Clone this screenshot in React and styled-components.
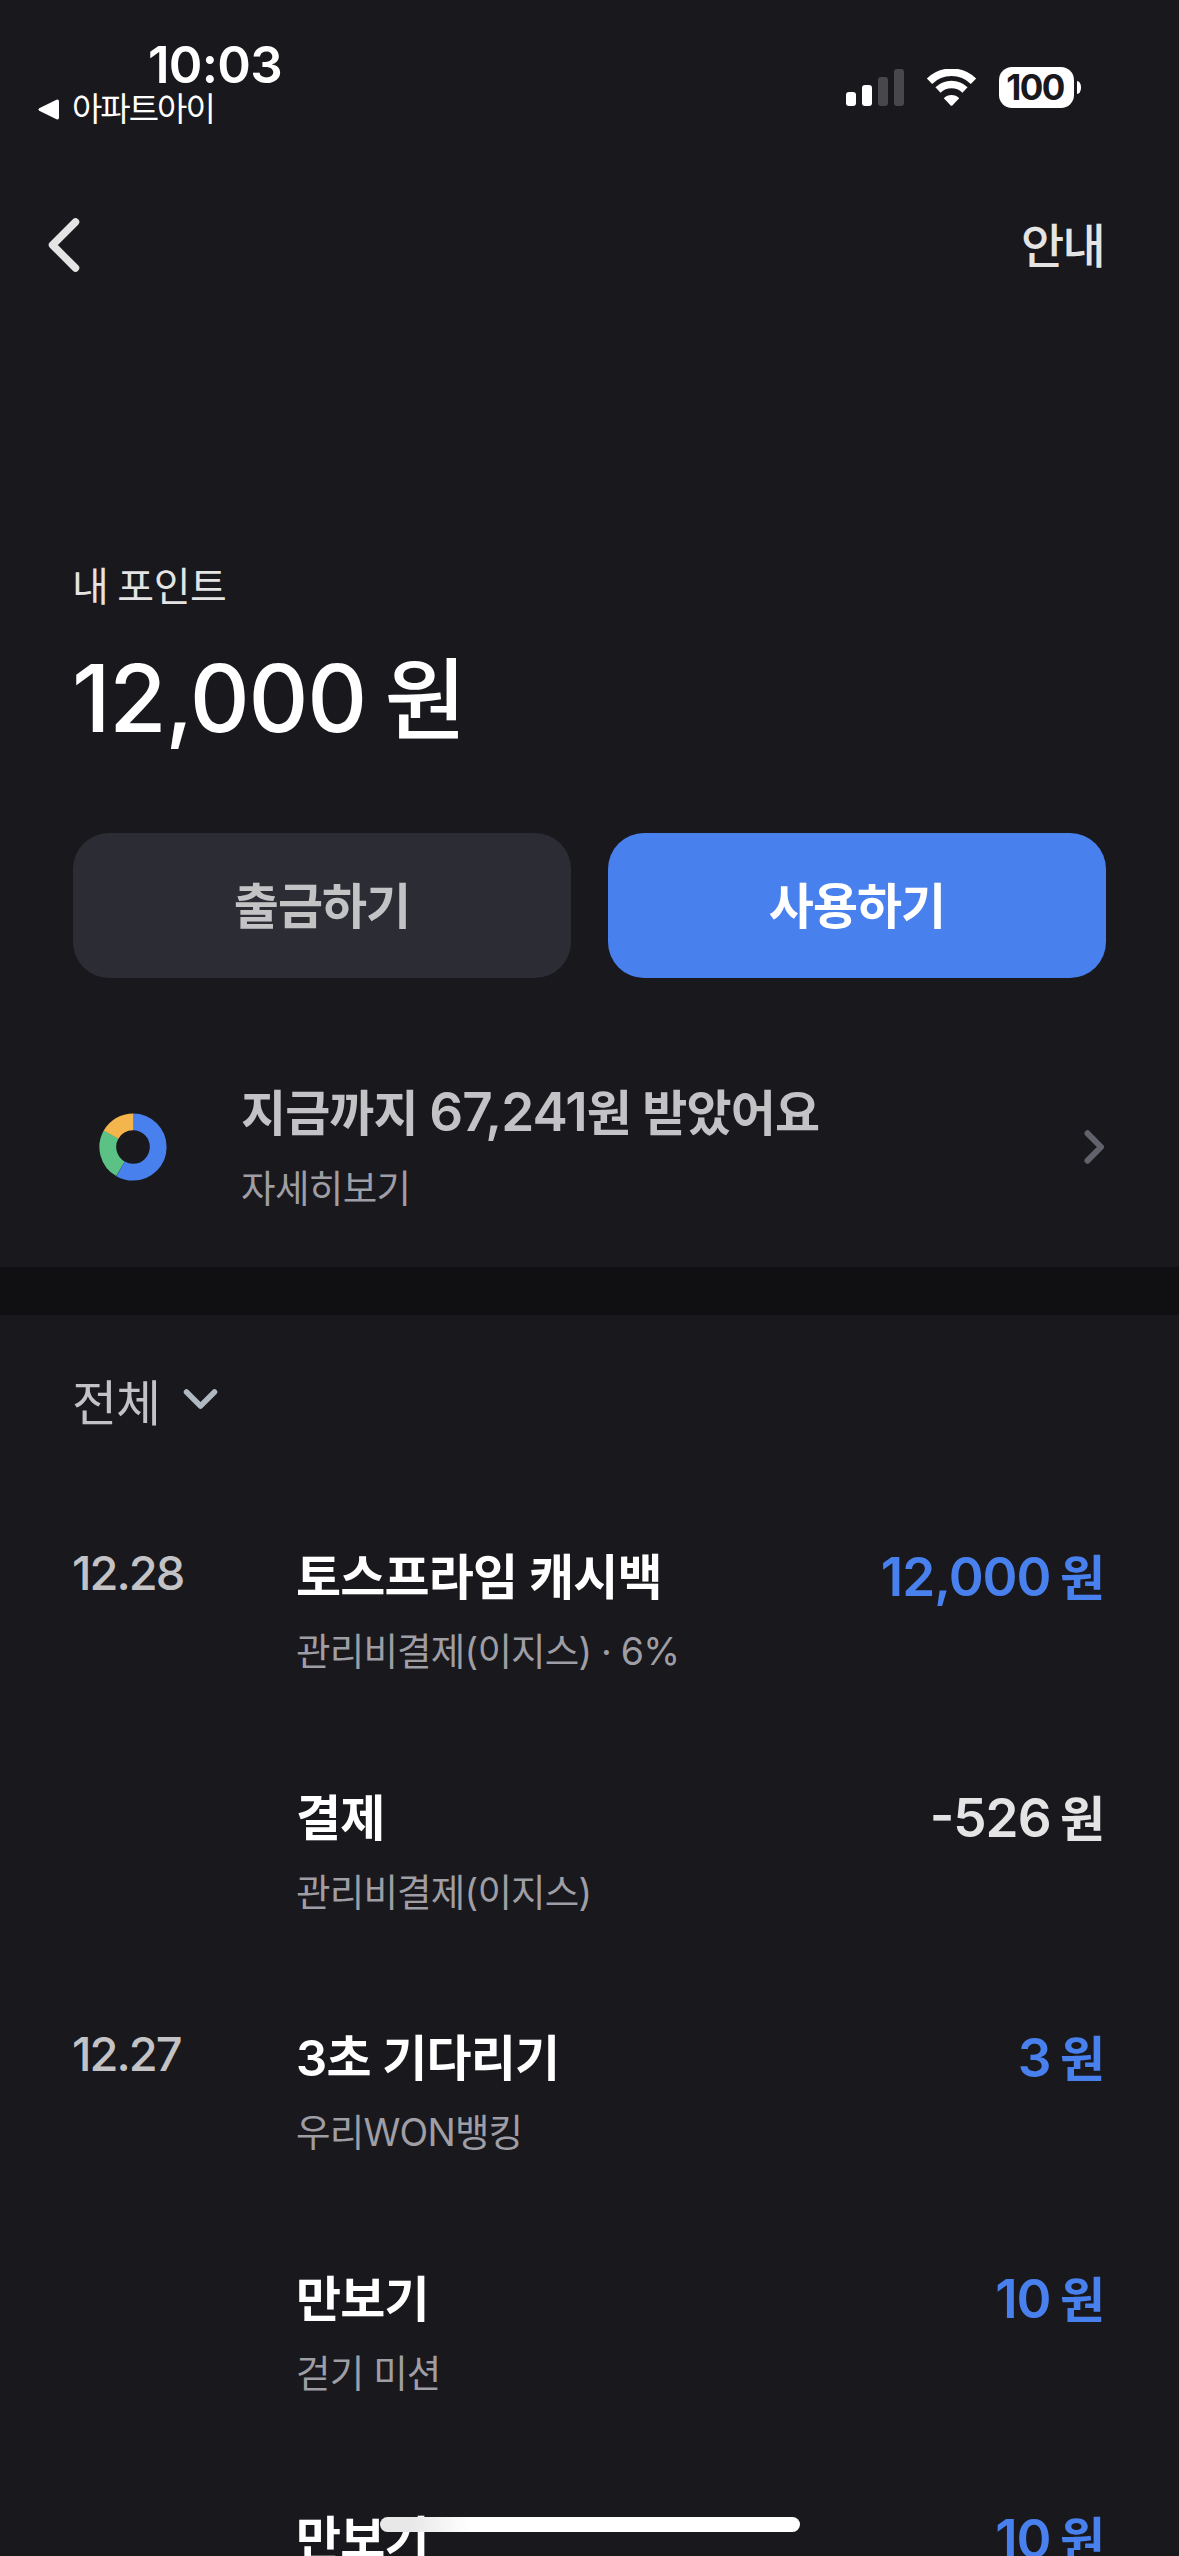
import React from "react";
import styled, { createGlobalStyle } from "styled-components";

const GlobalStyle = createGlobalStyle`
  * {
    box-sizing: border-box;
  }
  body {
    margin: 0;
    background: #19181d;
    overflow: hidden;
  }
  button {
    border: 0;
    padding: 0;
    background: none;
    color: inherit;
    font-family: inherit;
  }
  svg {
    display: block;
  }
`;

const Screen = styled.div`
  width: 1179px;
  height: 2556px;
  overflow: hidden;
  background: #19181d;
  color: #fff;
  font-family: Inter, "Noto Sans CJK KR", sans-serif;
  white-space: nowrap;
`;

const StatusBar = styled.header`
  display: flex;
  justify-content: space-between;
  height: 170px;
  padding: 40px 98px 0 37px;
`;

const Clock = styled.div`
  padding-left: 111px;
  font-size: 51px;
  font-weight: 600;
  line-height: 50px;
  letter-spacing: -0.7px;
`;

const BackToApp = styled.div`
  display: flex;
  align-items: center;
  gap: 12px;
  height: 40px;
  font-size: 33px;
  line-height: 36px;
  letter-spacing: -2px;
`;

const BackLabel = styled.span`
  padding-bottom: 2px;
`;

const StatusIcons = styled.div`
  display: flex;
  align-items: flex-start;
  padding-top: 27px;
`;

const Signal = styled.div`
  display: flex;
  align-items: flex-end;
  gap: 6px;
  height: 39px;
  margin-right: 22px;
`;

const Bar = styled.i`
  width: 10px;
  height: ${(props) => props.$height}px;
  border-radius: 3px;
  background: ${(props) => (props.$on ? "#fff" : "#48474c")};
`;

const Wifi = styled.svg`
  margin: 2px 22px 0 0;
`;

const Battery = styled.div`
  width: 75px;
  height: 41px;
  padding-right: 3px;
  border-radius: 13px;
  background: #fff;
  color: #19181d;
  font-size: 35px;
  font-weight: 700;
  line-height: 41px;
  letter-spacing: -1.6px;
  text-align: center;
`;

const BatteryCap = styled.i`
  width: 4px;
  height: 13px;
  margin: 14px 0 0 3px;
  border-radius: 0 4px 4px 0 / 0 6px 6px 0;
  background: #fff;
`;

const Nav = styled.nav`
  display: flex;
  align-items: center;
  justify-content: space-between;
  height: 150px;
  padding: 0 75px 0 48px;
`;

const GuideButton = styled.button`
  padding-bottom: 6px;
  color: #e4e4e5;
  font-size: 47px;
  font-weight: 500;
  letter-spacing: -1.8px;
`;

const Balance = styled.section`
  padding: 237px 73px 0 72px;
`;

const BalanceLabel = styled.div`
  color: #e4e4e5;
  font-size: 40px;
  line-height: 60px;
  letter-spacing: -0.4px;
  word-spacing: -2px;
`;

const BalanceAmount = styled.h1`
  height: 120px;
  margin: 21px 0 0;
  font-size: 93px;
  font-weight: 500;
  line-height: 120px;
  letter-spacing: -1.3px;
  word-spacing: -5px;
`;

const Actions = styled.div`
  display: flex;
  gap: 37px;
  padding: 75px 73px 0;
`;

const ActionButton = styled.button`
  flex: 1;
  height: 145px;
  padding-bottom: 7px;
  border-radius: 36px;
  background: ${(props) => (props.$primary ? "#4880ee" : "#2c2c35")};
  color: ${(props) => (props.$primary ? "#fff" : "#c3c3c6")};
  font-size: 49px;
  font-weight: 600;
  letter-spacing: -1px;
`;

const Summary = styled.section`
  display: flex;
  align-items: center;
  height: 289px;
  padding: 50px 73px 0 99px;
`;

const SummaryText = styled.div`
  flex: 1;
  margin-left: 74px;
`;

const SummaryTitle = styled.div`
  height: 70px;
  color: #c3c3c6;
  font-size: 49px;
  font-weight: 600;
  line-height: 70px;
  letter-spacing: -0.9px;
`;

const SummaryLink = styled.div`
  margin-top: 12px;
  color: #9e9ea4;
  font-size: 37.5px;
  line-height: 56px;
  letter-spacing: -0.6px;
`;

const IconSlot = styled.div`
  padding-bottom: 2px;
`;

const Divider = styled.div`
  height: 48px;
  background: #101013;
`;

const Filter = styled.button`
  display: flex;
  align-items: center;
  gap: 22px;
  height: 176px;
  margin-left: 72px;
  padding-bottom: 8px;
  color: #c3c3c6;
  font-size: 49px;
  letter-spacing: -1.2px;
`;

const List = styled.ul`
  margin: 0;
  padding: 0 75px 0 72px;
  list-style: none;
`;

const Row = styled.li`
  display: grid;
  grid-template-columns: 224px 1fr auto;
  height: 240.5px;
  padding-top: 51px;
`;

const DateText = styled.time`
  color: #c3c3c6;
  font-size: 47px;
  font-weight: 500;
  line-height: 62px;
  letter-spacing: -2px;
`;

const RowTitle = styled.div`
  padding-top: 1px;
  font-size: 49px;
  font-weight: 600;
  line-height: 70px;
  letter-spacing: -0.8px;
`;

const RowNote = styled.div`
  margin-top: 11px;
  color: #9e9ea4;
  font-size: 37.5px;
  line-height: 56px;
  letter-spacing: -0.8px;
`;

const Amount = styled.div`
  color: ${(props) => (props.$income ? "#4880ee" : "#e4e4e5")};
  font-size: 53px;
  font-weight: 600;
  line-height: 70px;
  letter-spacing: -1px;
  word-spacing: -3px;
  font-feature-settings: "case";
`;

// figures run larger than the hangul next to them
const Sized = styled.span`
  font-size: ${(props) => props.$size}px;
  line-height: 1;
`;

const HomeIndicator = styled.div`
  position: absolute;
  top: 2517px;
  left: 380px;
  width: 420px;
  height: 15px;
  border-radius: 8px;
  background: linear-gradient(90deg, #e8e8e8 0, #e8e8e8 30px, #fff 90px);
`;

const history = [
  { date: "12.28", title: "토스프라임 캐시백", note: "관리비결제(이지스) · 6%", amount: "12,000", income: true },
  { title: "결제", note: "관리비결제(이지스)", amount: "-526" },
  { date: "12.27", title: "3초 기다리기", note: "우리WON뱅킹", amount: "3", income: true },
  { title: "만보기", note: "걷기 미션", amount: "10", income: true },
  { title: "만보기", note: "걷기 미션", amount: "10", income: true },
];

function Chevron({ width, height, points, color, weight }) {
  return (
    <svg width={width} height={height} fill="none">
      <polyline
        points={points}
        stroke={color}
        strokeWidth={weight}
        strokeLinecap="round"
        strokeLinejoin="round"
      />
    </svg>
  );
}

function WifiIcon() {
  return (
    <Wifi width="51" height="38" viewBox="0 0 51 38" fill="none">
      <path d="M3.5 12.2 A31.5 31.5 0 0 1 47.5 12.2" stroke="#fff" strokeWidth="7.6" />
      <path d="M12 21 A19.4 19.4 0 0 1 39 21" stroke="#fff" strokeWidth="7.4" />
      <path d="M17.8 29.2 A11 11 0 0 1 33.2 29.2 L26.3 36.4 Q25.5 37.2 24.7 36.4 Z" fill="#fff" />
    </Wifi>
  );
}

function Donut() {
  return (
    <svg width="68" height="68" viewBox="-34 -34 68 68">
      <g fill="none" strokeWidth="16.8">
        <circle r="25.2" stroke="#4880ee" pathLength="100" strokeDasharray="58.3 100" transform="rotate(-90)" />
        <circle r="25.2" stroke="#5bc184" pathLength="100" strokeDasharray="25 100" transform="rotate(120)" />
        <circle r="25.2" stroke="#f5b54d" pathLength="100" strokeDasharray="16.8 100" transform="rotate(209.6)" />
      </g>
    </svg>
  );
}

function App() {
  return (
    <>
      <GlobalStyle />
      <Screen>
        <StatusBar>
          <div>
            <Clock>10:03</Clock>
            <BackToApp>
              <svg width="23" height="22" fill="#fff">
                <path d="M2.2 9.2 L19.5 0.8 Q22 0 22 2.6 V18.4 Q22 21 19.5 20.2 L2.2 11.8 Q0.5 10.5 2.2 9.2 Z" />
              </svg>
              <BackLabel>아파트아이</BackLabel>
            </BackToApp>
          </div>
          <StatusIcons>
            <Signal>
              <Bar $height={14} $on />
              <Bar $height={21} $on />
              <Bar $height={29} />
              <Bar $height={37} />
            </Signal>
            <WifiIcon />
            <Battery>100</Battery>
            <BatteryCap />
          </StatusIcons>
        </StatusBar>
        <Nav>
          <Chevron width="32" height="56" points="27.5,5 4.5,28 27.5,51" color="#e4e4e5" weight="7.5" />
          <GuideButton>안내</GuideButton>
        </Nav>
        <Balance>
          <BalanceLabel>내 포인트</BalanceLabel>
          <BalanceAmount>
            12,000 <Sized $size={89}>원</Sized>
          </BalanceAmount>
        </Balance>
        <Actions>
          <ActionButton>출금하기</ActionButton>
          <ActionButton $primary>사용하기</ActionButton>
        </Actions>
        <Summary>
          <IconSlot>
            <Donut />
          </IconSlot>
          <SummaryText>
            <SummaryTitle>
              지금까지 <Sized $size={53}>67,241</Sized>원 받았어요
            </SummaryTitle>
            <SummaryLink>자세히보기</SummaryLink>
          </SummaryText>
          <IconSlot>
            <Chevron width="22" height="36" points="3.5,4.3 17,18 3.5,31.7" color="#62626d" weight="6" />
          </IconSlot>
        </Summary>
        <Divider />
        <Filter>
          전체
          <Chevron width="36" height="22" points="4.5,4 18.5,18 32.5,4" color="#b0b8c1" weight="5.5" />
        </Filter>
        <List>
          {history.map((item, i) => (
            <Row key={i}>
              <DateText>{item.date}</DateText>
              <div>
                <RowTitle>{item.title}</RowTitle>
                <RowNote>{item.note}</RowNote>
              </div>
              <Amount $income={item.income}>
                {item.amount} <Sized $size={49}>원</Sized>
              </Amount>
            </Row>
          ))}
        </List>
        <HomeIndicator />
      </Screen>
    </>
  );
}

export default App;
